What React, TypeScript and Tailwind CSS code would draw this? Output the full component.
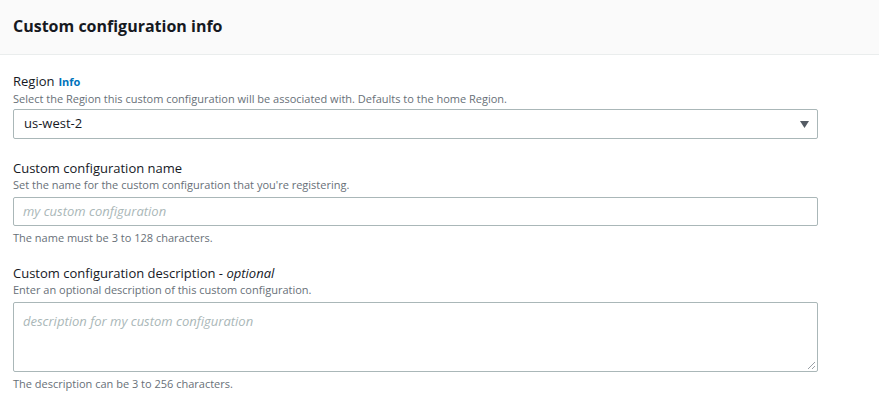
import React from 'react'

function Field({
  label,
  extra,
  description,
  constraint,
  controlGap = 'mt-[4px]',
  children,
}: {
  label: React.ReactNode
  extra?: React.ReactNode
  description: string
  constraint?: string
  controlGap?: string
  children: React.ReactNode
}) {
  return (
    <div className="flex flex-col">
      <div className="text-[13px] leading-[18px] text-[#16191f]">
        {label}
        {extra}
      </div>
      <div className="text-[11px] leading-[16px] text-[#687078]">{description}</div>
      <div className={controlGap}>{children}</div>
      {constraint && (
        <div className="mt-[4px] text-[11px] leading-[16px] text-[#687078]">{constraint}</div>
      )}
    </div>
  )
}

export default function App() {
  return (
    <div
      className="w-[879px] h-[402px] bg-white overflow-hidden"
      style={{ fontFamily: '"Open Sans", "Noto Sans", Arial, sans-serif' }}
    >
      {/* Header */}
      <div className="h-[55px] bg-[#fafafa] border-b border-[#eaeded] px-[13px] flex items-center">
        <h2 className="text-[16px] font-bold text-[#16191f] pb-[2px]">Custom configuration info</h2>
      </div>

      {/* Form */}
      <div className="w-[805px] px-[13px] pt-[17px] flex flex-col gap-[18px] box-content">
        <div className="pb-[2px]">
          <Field
            label="Region"
            extra={<span className="ml-[4px] text-[11px] font-bold text-[#0073bb]">Info</span>}
            description="Select the Region this custom configuration will be associated with. Defaults to the home Region."
            controlGap="mt-[2px]"
          >
            <div className="h-[30px] border border-[#aab7b8] rounded-[2px] flex items-center justify-between pl-[10px] pr-[8px]">
              <span className="text-[13px] text-[#16191f]">us-west-2</span>
              <svg width="9" height="7" viewBox="0 0 9 7">
                <path d="M0 0 H9 L4.5 7 Z" fill="#545b64" />
              </svg>
            </div>
          </Field>
        </div>

        <Field
          label="Custom configuration name"
          description="Set the name for the custom configuration that you're registering."
          constraint="The name must be 3 to 128 characters."
        >
          <div className="h-[29px] border border-[#aab7b8] rounded-[2px] flex items-center pl-[9px]">
            <span className="text-[13px] italic text-[#aab7b8]">my custom configuration</span>
          </div>
        </Field>

        <Field
          label={
            <>
              Custom configuration description - <i>optional</i>
            </>
          }
          description="Enter an optional description of this custom configuration."
          constraint="The description can be 3 to 256 characters."
        >
          <div className="relative h-[70px] border border-[#aab7b8] rounded-[2px] pl-[9px] pt-[5px]">
            <span className="text-[13px] italic text-[#aab7b8]">description for my custom configuration</span>
            <svg className="absolute right-[1px] bottom-[1px]" width="9" height="9" viewBox="0 0 9 9">
              <path d="M8 1 L1 8 M8 5 L5 8" stroke="#9aa0a6" strokeWidth="1" />
            </svg>
          </div>
        </Field>
      </div>
    </div>
  )
}
